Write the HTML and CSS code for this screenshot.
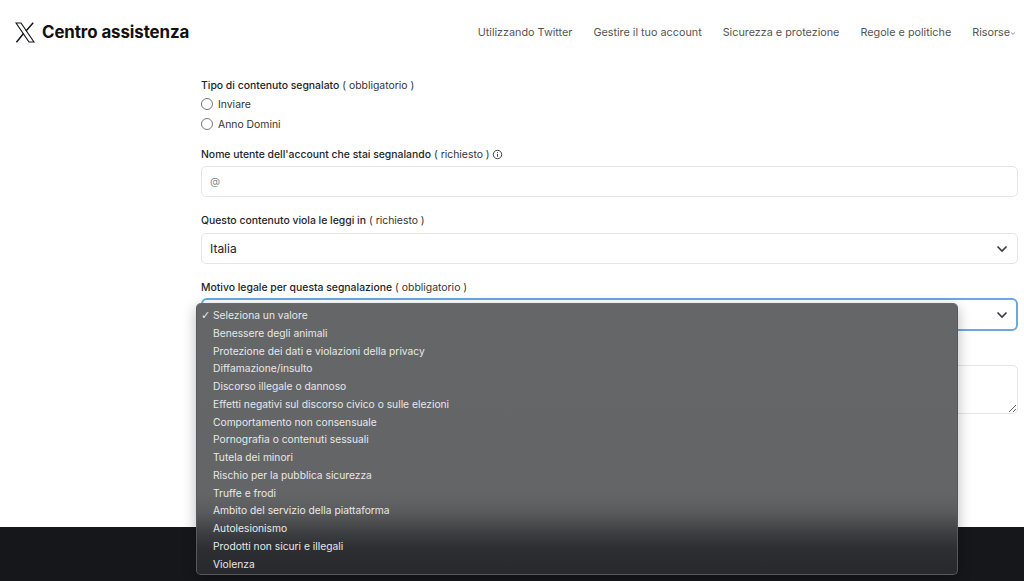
FILE: index.html
```html
<!DOCTYPE html>
<html lang="it">
<head>
<meta charset="utf-8">
<title>Centro assistenza</title>
<link rel="stylesheet" href="styles.css">
</head>
<body>
<header class="site-header">
  <a class="brand">
    <svg class="brand-logo" viewBox="0 0 20 21" aria-hidden="true"><path class="logo-body" d="M1 1h5l13 19h-5z"/><path class="logo-arm" d="M18.2 .8 11 8.9M8.6 11.6 1.4 20.2"/></svg>
    <span class="brand-name">Centro assistenza</span>
  </a>
  <nav class="nav">
    <a>Utilizzando Twitter</a>
    <a>Gestire il tuo account</a>
    <a>Sicurezza e protezione</a>
    <a>Regole e politiche</a>
    <a class="nav-more">Risorse<svg class="nav-caret" viewBox="0 0 8 5"><path d="M1.5 1.2 4 3.6l2.5-2.4"/></svg></a>
  </nav>
</header>

<main class="form">
  <section class="field field-radio">
    <div class="label"><b>Tipo di contenuto segnalato</b> ( obbligatorio )</div>
    <label class="radio"><span class="radio-dot"></span>Inviare</label>
    <label class="radio"><span class="radio-dot"></span>Anno Domini</label>
  </section>
  <section class="field">
    <div class="label"><b>Nome utente dell'account che stai segnalando</b> ( richiesto )
      <svg class="info" viewBox="0 0 12 12"><circle cx="6" cy="6" r="4.6"/><path d="M6 5.4v3M6 3.4v1"/></svg>
    </div>
    <input class="control input" type="text" placeholder="@">
  </section>
  <section class="field">
    <div class="label"><b>Questo contenuto viola le leggi in</b> ( richiesto )</div>
    <div class="control select">Italia
      <svg class="chevron" viewBox="0 0 12 8"><path d="M1.5 1.5 6 6l4.5-4.5"/></svg>
    </div>
  </section>
  <section class="field">
    <div class="label"><b>Motivo legale per questa segnalazione</b> ( obbligatorio )</div>
    <div class="control select select-focus">
      <svg class="chevron" viewBox="0 0 12 8"><path d="M1.5 1.5 6 6l4.5-4.5"/></svg>
    </div>
  </section>
  <section class="field field-text">
    <textarea class="control textarea"></textarea>
  </section>
</main>

<footer class="site-footer"></footer>

<ul class="menu">
  <li class="menu-item menu-item-checked">Seleziona un valore</li>
  <li class="menu-item">Benessere degli animali</li>
  <li class="menu-item">Protezione dei dati e violazioni della privacy</li>
  <li class="menu-item">Diffamazione/insulto</li>
  <li class="menu-item">Discorso illegale o dannoso</li>
  <li class="menu-item">Effetti negativi sul discorso civico o sulle elezioni</li>
  <li class="menu-item">Comportamento non consensuale</li>
  <li class="menu-item">Pornografia o contenuti sessuali</li>
  <li class="menu-item">Tutela dei minori</li>
  <li class="menu-item">Rischio per la pubblica sicurezza</li>
  <li class="menu-item">Truffe e frodi</li>
  <li class="menu-item">Ambito del servizio della piattaforma</li>
  <li class="menu-item">Autolesionismo</li>
  <li class="menu-item">Prodotti non sicuri e illegali</li>
  <li class="menu-item">Violenza</li>
</ul>
</body>
</html>
```
FILE: styles.css
```css
* { box-sizing: border-box; }
html, body { margin: 0; height: 581px; overflow: hidden; }
body {
  position: relative;
  display: flex;
  flex-direction: column;
  background: #fff;
  color: #212529;
  font-family: Inter, "Liberation Sans", sans-serif;
  font-size: 10.4px;
}
.site-header {
  height: 64px;
  flex: none;
  display: flex;
  align-items: center;
  justify-content: space-between;
  padding: 0 8px 0 15px;
}
.brand { display: flex; align-items: center; gap: 7px; color: #111; }
.brand-logo { width: 20px; height: 21px; fill: none; stroke: #14171a; }
.logo-body { stroke-width: 1.2; stroke-linejoin: miter; }
.logo-arm { stroke-width: 1.5; }
.brand-name { font-size: 16.9px; font-weight: 700; letter-spacing: -0.1px; }
.nav { display: flex; gap: 21px; color: #555; font-size: 10.8px; letter-spacing: 0; margin-top: 1px; }
.nav-more { display: flex; align-items: center; }
.nav-caret { width: 6px; height: 5px; margin-top: 2px; fill: none; stroke: #666; stroke-width: 1; }
.form {
  flex: 1;
  display: flex;
  flex-direction: column;
  padding: 15px 6px 0 201px;
}
.field { display: flex; flex-direction: column; margin-bottom: 17px; }
.field-radio { margin-bottom: 14px; }
.field-text { margin-top: 17px; margin-bottom: 0; }
.label { height: 13px; line-height: 13px; margin-bottom: 5px; color: #333; white-space: nowrap; display: flex; align-items: center; gap: 3px; }
.label b { font-weight: 500; color: #212529; }
.field-radio .label { margin-bottom: 2px; }
.radio { display: flex; align-items: center; gap: 5px; height: 20px; color: #333; }
.radio-dot { width: 12px; height: 12px; border: 1px solid #767676; border-radius: 50%; background: #fff; }
.info { width: 11px; height: 11px; margin-left: -1px; fill: none; stroke: #333; stroke-width: 1; }
.control {
  display: flex;
  align-items: center;
  width: 100%;
  border: 1px solid #e3e6e9;
  border-radius: 5px;
  background: #fff;
  padding: 0 8px;
  font: inherit;
  color: #212529;
}
.input { height: 31px; font-size: 10.4px; outline: none; }
.input::placeholder { color: #7f8a94; opacity: 1; }
.select { height: 31px; margin-top: 1px; justify-content: space-between; font-size: 12px; padding-right: 9px; }
.chevron { width: 12px; height: 8px; margin-left: auto; fill: none; stroke: #343a40; stroke-width: 1.6; }
.select-focus { height: 33px; margin-top: -1px; border: 2px solid #6ba9e0; border-radius: 6px; padding-right: 8px; }
.textarea { height: 49px; display: block; resize: vertical; outline: none; }
.site-footer { height: 54px; flex: none; background: #16171a; }
.menu {
  position: absolute;
  left: 196px;
  top: 303px;
  width: 762px;
  height: 272px;
  margin: 0;
  padding: 3px 0 0;
  list-style: none;
  border-radius: 5px;
  border: 1px solid #57585b;
  border-top-color: #6a6b6d;
  background: linear-gradient(to bottom, #646668 0, #636567 190px, #5a5b5d 208px, #3c3d40 230px, #2d2e31 245px, #27282b 272px);
  box-shadow: 0 4px 14px rgba(0, 0, 0, 0.28);
  color: #e8e8e8;
  font-size: 10.25px;
}
.menu-item { height: 17.75px; line-height: 17.75px; padding-left: 16px; position: relative; white-space: nowrap; }
.menu-item-checked::before { content: "✓"; position: absolute; left: 4px; top: 0; font-size: 11px; font-family: "DejaVu Sans", sans-serif; }
```
